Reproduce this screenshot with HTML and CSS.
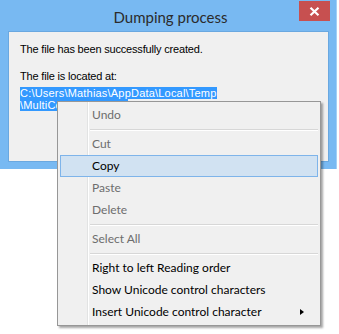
FILE: index.html
```html
<!DOCTYPE html>
<html>
<head>
<meta charset="utf-8">
<link rel="stylesheet" href="styles.css">
</head>
<body>
<div class="window">
  <div class="titlebar">
    <span></span>
    <span class="title">Dumping process</span>
    <span class="close"><svg width="11" height="9" viewBox="0 0 11 9"><path d="M1.5 0.8 L9.5 8.2 M9.5 0.8 L1.5 8.2" stroke="#fff" stroke-width="2.2" fill="none"/></svg></span>
  </div>
  <div class="client">
    <p class="msg">The file has been successfully created.</p>
    <p class="msg loc">The file is located at:</p>
    <div class="path"><span class="sel">C:\Users\Mathias\AppData\Local\Temp</span><br><span class="sel sel2">\MultiCo</span></div>
  </div>
</div>
<div class="menu">
  <div class="item dis">Undo</div>
  <div class="sep"></div>
  <div class="item dis">Cut</div>
  <div class="item hot">Copy</div>
  <div class="item dis">Paste</div>
  <div class="item dis">Delete</div>
  <div class="sep"></div>
  <div class="item dis">Select All</div>
  <div class="sep"></div>
  <div class="item">Right to left Reading order</div>
  <div class="item">Show Unicode control characters</div>
  <div class="item sub">Insert Unicode control character<span class="arrow"></span></div>
</div>
</body>
</html>
```
FILE: styles.css
```css
html, body {
  margin: 0;
  padding: 0;
  background: #ffffff;
}
body {
  width: 339px;
  height: 334px;
  position: relative;
  overflow: hidden;
}
.window {
  width: 337px;
  box-sizing: border-box;
  background: #78b9f2;
  padding: 0 7px 7px 8px;
  border-right: 1px solid #a3cff5;
}
.titlebar {
  height: 31px;
  display: grid;
  grid-template-columns: 1fr auto 1fr;
  align-items: start;
}
.title {
  font-family: "Lato", "Segoe UI", sans-serif;
  font-size: 15px;
  color: #2b2b2b;
  line-height: 20px;
  margin-top: 7px;
  margin-left: 4px;
}
.close {
  justify-self: end;
  width: 31px;
  height: 20px;
  margin-top: 1px;
  margin-right: -1px;
  background: #c75050;
  display: flex;
  align-items: center;
  justify-content: center;
}
.close svg { display: block; }
.client {
  height: 131px;
  box-sizing: border-box;
  background: #f0f0f0;
  border: 1px solid #6aa8e0;
  padding: 11px 0 0 11px;
  font-family: "Liberation Sans", Arial, sans-serif;
  font-size: 11px;
  color: #000;
}
.msg {
  margin: 0;
  line-height: 13px;
  letter-spacing: -0.18px;
}
.loc {
  margin-top: 14px;
}
.path {
  margin-top: 4px;
  line-height: 12px;
  letter-spacing: 0.2px;
}
.sel {
  background: #3399ff;
  color: #fff;
}
.sel2 {
  padding-right: 66px;
}
.menu {
  position: absolute;
  left: 57px;
  top: 101px;
  width: 264px;
  box-sizing: border-box;
  background: #f0f0f0 linear-gradient(to right, transparent 29px, #e2e3e3 29px, #e2e3e3 30px, #ffffff 30px, #ffffff 31px, transparent 31px);
  border: 1px solid #979797;
  padding: 2px;
  box-shadow: 2px 2px 2px rgba(0, 0, 0, 0.35);
  font-family: "Lato", "Segoe UI", sans-serif;
  font-size: 12px;
  color: #000;
}
.item {
  height: 22px;
  line-height: 22px;
  padding-left: 32px;
  box-sizing: border-box;
  position: relative;
  display: flex;
  align-items: center;
}
.item.dis {
  color: #6d6d6d;
}
.item.hot {
  background: #d1e2f2;
  border: 1px solid #7eb4ea;
  padding-left: 31px;
}
.sep {
  height: 7px;
  margin-left: 30px;
  background: linear-gradient(to bottom, transparent 3px, #d7d7d7 3px, #d7d7d7 4px, #ffffff 4px, #ffffff 5px, transparent 5px);
}
.arrow {
  position: absolute;
  right: 14px;
  top: 8px;
  width: 0;
  height: 0;
  border-top: 3.5px solid transparent;
  border-bottom: 3.5px solid transparent;
  border-left: 4px solid #000;
}
```
